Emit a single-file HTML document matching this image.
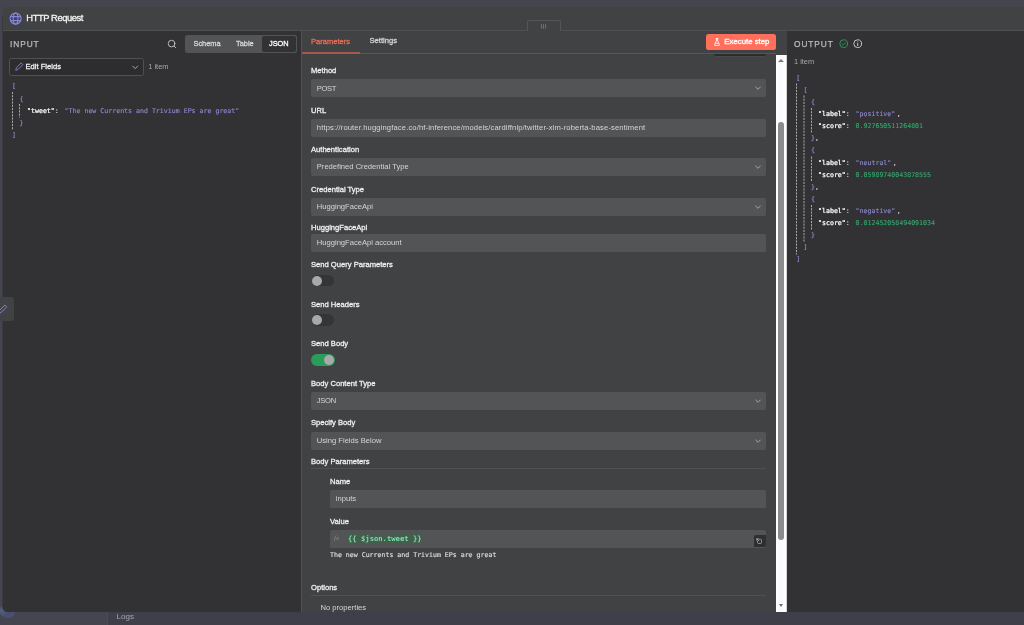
<!DOCTYPE html>
<html lang="en">
<head>
<meta charset="utf-8">
<title>HTTP Request</title>
<style>
*{box-sizing:border-box;margin:0;padding:0}
html,body{width:1024px;height:625px;overflow:hidden}
body{background:#44454e;font-family:"Liberation Sans",sans-serif;color:#ddd;position:relative}
.a{position:absolute}
.t{position:absolute;white-space:nowrap;line-height:1}
.lbl{font-size:7.6px;color:#f2f2f2;-webkit-text-stroke:0.28px #f2f2f2}
.m{-webkit-text-stroke:0.28px currentColor}
.inp{position:absolute;background:#535456;border-radius:2px;height:18px;left:311px;width:455px}
.inp span{position:absolute;left:5.8px;top:5.2px;font-size:7.6px;color:#d6d6d9;line-height:1;white-space:nowrap}
.mono{font-family:"DejaVu Sans Mono","Liberation Mono",monospace}
.js{font-size:6.6px}
.k{color:#fff;-webkit-text-stroke:0.22px #fff}
.s{color:#9088d4;-webkit-text-stroke:0.12px #9088d4}
.b{color:#8e87cf;-webkit-text-stroke:0.15px #8e87cf}
.n{color:#31a86c;-webkit-text-stroke:0.12px #31a86c}
.p{color:#d8d8dc;-webkit-text-stroke:0.15px #d8d8dc}
.tg{position:absolute;left:311.6px;width:22.4px;height:11.5px;border-radius:6px;background:#353538}
.tg i{position:absolute;left:0.6px;top:0.75px;width:10px;height:10px;border-radius:50%;background:#a9a9ac}
.tg.on{background:#2b9c5b;left:311px;width:23.5px;height:12px}
.tg.on i{left:12.6px;top:1px}
.g{position:absolute;width:0;border-left:1px dashed #c9c9cc}
</style>
</head>
<body><div style="position:absolute;left:0;top:0;width:1024px;height:625px;will-change:transform">
<!-- backdrop remnants -->
<div class="a" style="left:107px;top:606px;width:917px;height:19px;background:#3f3f4a;border-left:1px solid #4a4b56"></div>
<div class="a" style="left:0;top:603.5px;width:14.5px;height:14.5px;border-radius:50%;background:linear-gradient(135deg,#5d6b94,#474d70 60%,#50547a)"></div>
<div class="t" style="left:116.6px;top:612.6px;font-size:8.1px;color:#a6a6b2">Logs</div>

<!-- modal -->
<div class="a" style="left:2px;top:6px;width:1031px;height:606px;background:#3a3b40;border-radius:5.5px 0 0 5.5px"></div>
<div class="a" style="left:3px;top:7px;width:1030px;height:605px;background:#323235;border-radius:5px 0 0 5px"></div>
<div class="a" style="left:2px;top:6px;width:1031px;height:10px;background:#46474d;border-radius:5.5px 0 0 0"></div>
<div class="a" style="left:3px;top:7px;width:1030px;height:24px;background:#414244;border-radius:5px 0 0 0;border-bottom:1px solid #4e4f52"></div>
<!-- middle panel -->
<div class="a" style="left:301px;top:31px;width:486px;height:581px;background:#414244;border-left:1px solid #505154"></div>


<!-- header -->
<svg class="a" style="left:8.6px;top:12.1px" width="13.2" height="13.2" viewBox="0 0 24 24" fill="none" stroke="#8883e2" stroke-width="2.1" stroke-linecap="round" stroke-linejoin="round"><circle cx="12" cy="12" r="10"/><ellipse cx="12" cy="12" rx="4.3" ry="10"/><path d="M3 8.4h18M3 15.6h18"/></svg>
<div class="t" style="left:26.3px;top:13.1px;font-size:9.4px;letter-spacing:-0.43px;color:#f4f4f4;-webkit-text-stroke:0.3px #f4f4f4" id="ttl">HTTP Request</div>
<!-- drag handle tab -->
<div class="a" style="left:527px;top:20px;width:34px;height:11px;background:#414244;border:1px solid #55565a;border-bottom:none;border-radius:2px 2px 0 0"></div>
<svg class="a" style="left:538px;top:22px" width="12" height="9" fill="none" stroke="#77787c" stroke-width="0.9"><path d="M3.45 2.2v4.6M5.55 2.2v4.6M7.65 2.2v4.6"/></svg>

<!-- INPUT panel -->
<div class="t" style="left:10px;top:39.5px;font-size:8.3px;color:#b9b9bd;letter-spacing:0.95px;-webkit-text-stroke:0.25px #b9b9bd" id="inputlbl">INPUT</div>
<svg class="a" style="left:167px;top:39px" width="10" height="10" viewBox="0 0 24 24" fill="none" stroke="#cbcbce" stroke-width="2.1" stroke-linecap="round"><circle cx="11" cy="11" r="8"/><path d="M21 21l-4.3-4.3"/></svg>
<div class="a" style="left:185px;top:35px;width:112px;height:18px;background:#535456;border-radius:2.5px"></div>
<div class="a" style="left:262px;top:36px;width:34px;height:16px;background:#323235;border-radius:2px"></div>
<div class="t m" style="left:193.5px;top:39.6px;font-size:7.4px;color:#d8d8da">Schema</div>
<div class="t m" style="left:236px;top:39.6px;font-size:7.4px;color:#d8d8da">Table</div>
<div class="t m" style="left:269px;top:39.5px;font-size:7.4px;color:#fff">JSON</div>
<div class="a" style="left:9px;top:58px;width:135px;height:18px;border:1px solid #505154;border-radius:2.5px;background:#2d2d30"></div>
<svg class="a" style="left:14.5px;top:62px" width="9" height="9" viewBox="0 0 24 24" fill="none" stroke="#8883e2" stroke-width="2.2" stroke-linecap="round" stroke-linejoin="round"><path d="M17 3l4 4L7.5 20.5 2 22l1.5-5.5z"/></svg>
<div class="t m" style="left:25.5px;top:63px;font-size:7.6px;color:#f0f0f0">Edit Fields</div>
<svg class="a" style="left:130.5px;top:62.7px" width="8.4" height="8.4" viewBox="0 0 24 24" fill="none" stroke="#bdbdc0" stroke-width="2.4" stroke-linecap="round" stroke-linejoin="round"><path d="M5 9l7 7 7-7"/></svg>
<div class="t" style="left:148.3px;top:62.9px;font-size:7.4px;color:#a8a8ac">1 item</div>
<!-- input json -->
<div class="t mono js b" style="left:12px;top:83.3px">[</div>
<div class="t mono js b" style="left:19.5px;top:95.5px">{</div>
<div class="t mono js" style="left:27px;top:107.7px"><span class="k">"tweet"</span><span class="p">:</span> <span class="s" style="margin-left:1.8px">"The new Currents and Trivium EPs are great"</span></div>
<div class="t mono js b" style="left:19.5px;top:119.9px">}</div>
<div class="t mono js b" style="left:12px;top:132.1px">]</div>
<!-- left floating edit chip -->
<div class="a" style="left:-4px;top:297px;width:18px;height:24px;background:#414244;border-radius:3px"></div>
<svg class="a" style="left:-2px;top:304px" width="10" height="10" viewBox="0 0 24 24" fill="none" stroke="#8883e2" stroke-width="2.2" stroke-linecap="round" stroke-linejoin="round"><path d="M17 3l4 4L7.5 20.5 2 22l1.5-5.5z"/></svg>


<!-- middle: tabs -->
<div class="a" style="left:302px;top:53px;width:474px;height:1px;background:#55565a"></div>
<div class="a" style="left:302px;top:52px;width:58px;height:2px;background:#a8574b"></div>
<div class="t m" style="left:311px;top:37.5px;font-size:7.55px;color:#ee6b59">Parameters</div>
<div class="t m" style="left:369.5px;top:37px;font-size:7.6px;color:#d6d6d9">Settings</div>
<!-- execute button -->
<div class="a" style="left:705.8px;top:34px;width:70.6px;height:16px;background:#ff6f5c;border-radius:2.5px"></div>
<svg class="a" style="left:712.5px;top:38px" width="8" height="8" viewBox="0 0 24 24" fill="none" stroke="#fff" stroke-width="2.4" stroke-linecap="round" stroke-linejoin="round"><path d="M9 2h6M10 2v7L4.5 20a1.4 1.4 0 0 0 1.3 2h12.4a1.4 1.4 0 0 0 1.3-2L14 9V2M7 16h10"/></svg>
<div class="t" style="left:724.3px;top:37.6px;font-size:7.8px;color:#fff;-webkit-text-stroke:0.32px #fff">Execute step</div>
<!-- partial element peeking under header -->
<div class="a" style="left:713.5px;top:54px;width:52.5px;height:3px;background:#2c2c2f;border-radius:0 0 3px 3px;border-bottom:1px solid #48494c"></div>

<!-- middle: form -->
<div class="t lbl" style="left:311px;top:66.8px">Method</div>
<div class="inp" style="top:79px"><span style="letter-spacing:-0.4px;top:5.5px">POST</span></div>
<div class="t lbl" style="left:311px;top:106.8px">URL</div>
<div class="inp" style="top:118.7px"><span style="letter-spacing:0.14px">https://router.huggingface.co/hf-inference/models/cardiffnlp/twitter-xlm-roberta-base-sentiment</span></div>
<div class="t lbl" style="left:311px;top:145.5px">Authentication</div>
<div class="inp" style="top:157.5px"><span>Predefined Credential Type</span></div>
<div class="t lbl" style="left:311px;top:186.3px">Credential Type</div>
<div class="inp" style="top:198.3px"><span>HuggingFaceApi</span></div>
<div class="t lbl" style="left:311px;top:223.5px">HuggingFaceApi</div>
<div class="inp" style="top:233.5px"><span>HuggingFaceApi account</span></div>
<div class="t lbl" style="left:311px;top:260.5px">Send Query Parameters</div>
<div class="tg" style="top:274.8px"><i></i></div>
<div class="t lbl" style="left:311px;top:301px">Send Headers</div>
<div class="tg" style="top:314.3px"><i></i></div>
<div class="t lbl" style="left:311px;top:339.5px">Send Body</div>
<div class="tg on" style="top:353.5px"><i></i></div>
<div class="t lbl" style="left:311px;top:379.8px">Body Content Type</div>
<div class="inp" style="top:391.5px"><span style="letter-spacing:-0.3px;top:5.5px">JSON</span></div>
<div class="t lbl" style="left:311px;top:419.3px">Specify Body</div>
<div class="inp" style="top:431.7px"><span>Using Fields Below</span></div>
<div class="t lbl" style="left:311px;top:457.5px">Body Parameters</div>
<div class="a" style="left:311px;top:468px;width:455px;height:1px;background:#505154"></div>
<div class="t lbl" style="left:330px;top:477.5px">Name</div>
<div class="inp" style="top:489.5px;left:330px;width:436px"><span>inputs</span></div>
<div class="t lbl" style="left:330px;top:517.5px">Value</div>
<div class="inp" style="top:529.5px;left:330px;width:436px"></div>
<div class="t" style="left:334px;top:535px;font-size:7px;font-style:italic;font-family:'Liberation Serif',serif;color:#88898d">fx</div>
<div class="t mono" style="left:348px;top:534.3px;font-size:7.2px;font-weight:bold;color:#7bdca3;background:#445d4f;padding:0.5px 0">{{ $json.tweet }}</div>
<div class="a" style="left:754px;top:535px;width:12px;height:12px;background:#2f2f32;border-radius:2px 0 2px 0"></div>
<svg class="a" style="left:756.4px;top:537.6px" width="6.3" height="6.3" viewBox="0 0 24 24" fill="none" stroke="#c2c2c5" stroke-width="2.5" stroke-linecap="round" stroke-linejoin="round"><path d="M11 5h6a4 4 0 0 1 4 4v8a4 4 0 0 1-4 4h-7a4 4 0 0 1-4-4v-5"/><path d="M3 3l8 8M3 9V3h6"/></svg>
<div class="t mono" style="left:330px;top:552.1px;font-size:6.58px;color:#e2e2e4;-webkit-text-stroke:0.1px #e2e2e4">The new Currents and Trivium EPs are great</div>
<div class="t lbl" style="left:311px;top:584px">Options</div>
<div class="a" style="left:311px;top:595px;width:455px;height:1px;background:#505154"></div>
<div class="t" style="left:320.5px;top:604px;font-size:7.6px;color:#d6d6d9">No properties</div>
<!-- select chevrons -->
<svg class="a" style="left:754px;top:84px" width="8" height="8" viewBox="0 0 24 24" fill="none" stroke="#bdbdc0" stroke-width="2.4" stroke-linecap="round" stroke-linejoin="round"><path d="M5 9l7 7 7-7"/></svg>
<svg class="a" style="left:754px;top:163px" width="8" height="8" viewBox="0 0 24 24" fill="none" stroke="#bdbdc0" stroke-width="2.4" stroke-linecap="round" stroke-linejoin="round"><path d="M5 9l7 7 7-7"/></svg>
<svg class="a" style="left:754px;top:203.3px" width="8" height="8" viewBox="0 0 24 24" fill="none" stroke="#bdbdc0" stroke-width="2.4" stroke-linecap="round" stroke-linejoin="round"><path d="M5 9l7 7 7-7"/></svg>
<svg class="a" style="left:754px;top:396.5px" width="8" height="8" viewBox="0 0 24 24" fill="none" stroke="#bdbdc0" stroke-width="2.4" stroke-linecap="round" stroke-linejoin="round"><path d="M5 9l7 7 7-7"/></svg>
<svg class="a" style="left:754px;top:436.7px" width="8" height="8" viewBox="0 0 24 24" fill="none" stroke="#bdbdc0" stroke-width="2.4" stroke-linecap="round" stroke-linejoin="round"><path d="M5 9l7 7 7-7"/></svg>
<!-- scrollbar -->
<div class="a" style="left:776px;top:55px;width:10px;height:557px;background:linear-gradient(90deg,#fff,#fafafa 50%,#fff)"></div>
<div class="a" style="left:786px;top:55px;width:1px;height:557px;background:#d4d4d5"></div>
<div class="a" style="left:778.2px;top:122px;width:6.2px;height:418.4px;background:#8c8c8c;border-radius:3.1px"></div>
<div class="a" style="left:778.3px;top:58.8px;width:0;height:0;border-left:3px solid transparent;border-right:3px solid transparent;border-bottom:3.3px solid #7a7a7a"></div>
<div class="a" style="left:778.5px;top:603.6px;width:0;height:0;border-left:2.8px solid transparent;border-right:2.8px solid transparent;border-top:3.2px solid #6c6c6c"></div>

<!-- OUTPUT panel -->
<div class="t" style="left:794px;top:39.5px;font-size:8.3px;color:#b9b9bd;letter-spacing:0.95px;-webkit-text-stroke:0.25px #b9b9bd">OUTPUT</div>
<svg class="a" style="left:839px;top:39.2px" width="9.4" height="9.4" viewBox="0 0 24 24" fill="none" stroke="#2da15e" stroke-width="2.2" stroke-linecap="round" stroke-linejoin="round"><circle cx="12" cy="12" r="10"/><path d="M8 12.5l2.8 2.8L16 9.8"/></svg>
<svg class="a" style="left:853px;top:39.2px" width="9.4" height="9.4" viewBox="0 0 24 24" fill="none" stroke="#d8d8da" stroke-width="2.2" stroke-linecap="round" stroke-linejoin="round"><circle cx="12" cy="12" r="10"/><path d="M12 11v6M12 7.2v.1"/></svg>
<div class="t" style="left:794px;top:57.8px;font-size:7.4px;color:#a8a8ac">1 item</div>
<div class="t mono js" style="left:796.2px;top:74.8px"><span class="b">[</span></div>
<div class="t mono js" style="left:803.6px;top:86.9px"><span class="b">[</span></div>
<div class="t mono js" style="left:811px;top:99.0px"><span class="b">{</span></div>
<div class="t mono js" style="left:818px;top:111.1px"><span class="k">"label"</span><span class="p">:</span> <span class="s" style="margin-left:1.8px">"positive"</span><span class="p" style="margin-left:1.4px">,</span></div>
<div class="t mono js" style="left:818px;top:123.2px"><span class="k">"score"</span><span class="p">:</span> <span class="n" style="margin-left:1.8px">0.927650511264801</span></div>
<div class="t mono js" style="left:811px;top:135.3px"><span class="b">}</span><span class="p">,</span></div>
<div class="t mono js" style="left:811px;top:147.4px"><span class="b">{</span></div>
<div class="t mono js" style="left:818px;top:159.5px"><span class="k">"label"</span><span class="p">:</span> <span class="s" style="margin-left:1.8px">"neutral"</span><span class="p" style="margin-left:1.4px">,</span></div>
<div class="t mono js" style="left:818px;top:171.6px"><span class="k">"score"</span><span class="p">:</span> <span class="n" style="margin-left:1.8px">0.05989740043878555</span></div>
<div class="t mono js" style="left:811px;top:183.7px"><span class="b">}</span><span class="p">,</span></div>
<div class="t mono js" style="left:811px;top:195.8px"><span class="b">{</span></div>
<div class="t mono js" style="left:818px;top:207.9px"><span class="k">"label"</span><span class="p">:</span> <span class="s" style="margin-left:1.8px">"negative"</span><span class="p" style="margin-left:1.4px">,</span></div>
<div class="t mono js" style="left:818px;top:220.0px"><span class="k">"score"</span><span class="p">:</span> <span class="n" style="margin-left:1.8px">0.012452058494091034</span></div>
<div class="t mono js" style="left:811px;top:232.1px"><span class="b">}</span></div>
<div class="t mono js" style="left:803.6px;top:244.2px"><span class="b">]</span></div>
<div class="t mono js" style="left:796.2px;top:256.3px"><span class="b">]</span></div>
<svg class="a" style="left:0;top:0" width="1024" height="625" fill="none" stroke="#a9a9ad" stroke-width="1" stroke-dasharray="2.1 1.1">
<path d="M12.5 92v37.5M19.5 104v13.5"/>
<path d="M796.5 83.5v171M804 95.5v147M811.5 108v24.5M811.5 156.5v24.5M811.5 205v24.5"/>
</svg>
<!-- END -->
</div></body>
</html>
